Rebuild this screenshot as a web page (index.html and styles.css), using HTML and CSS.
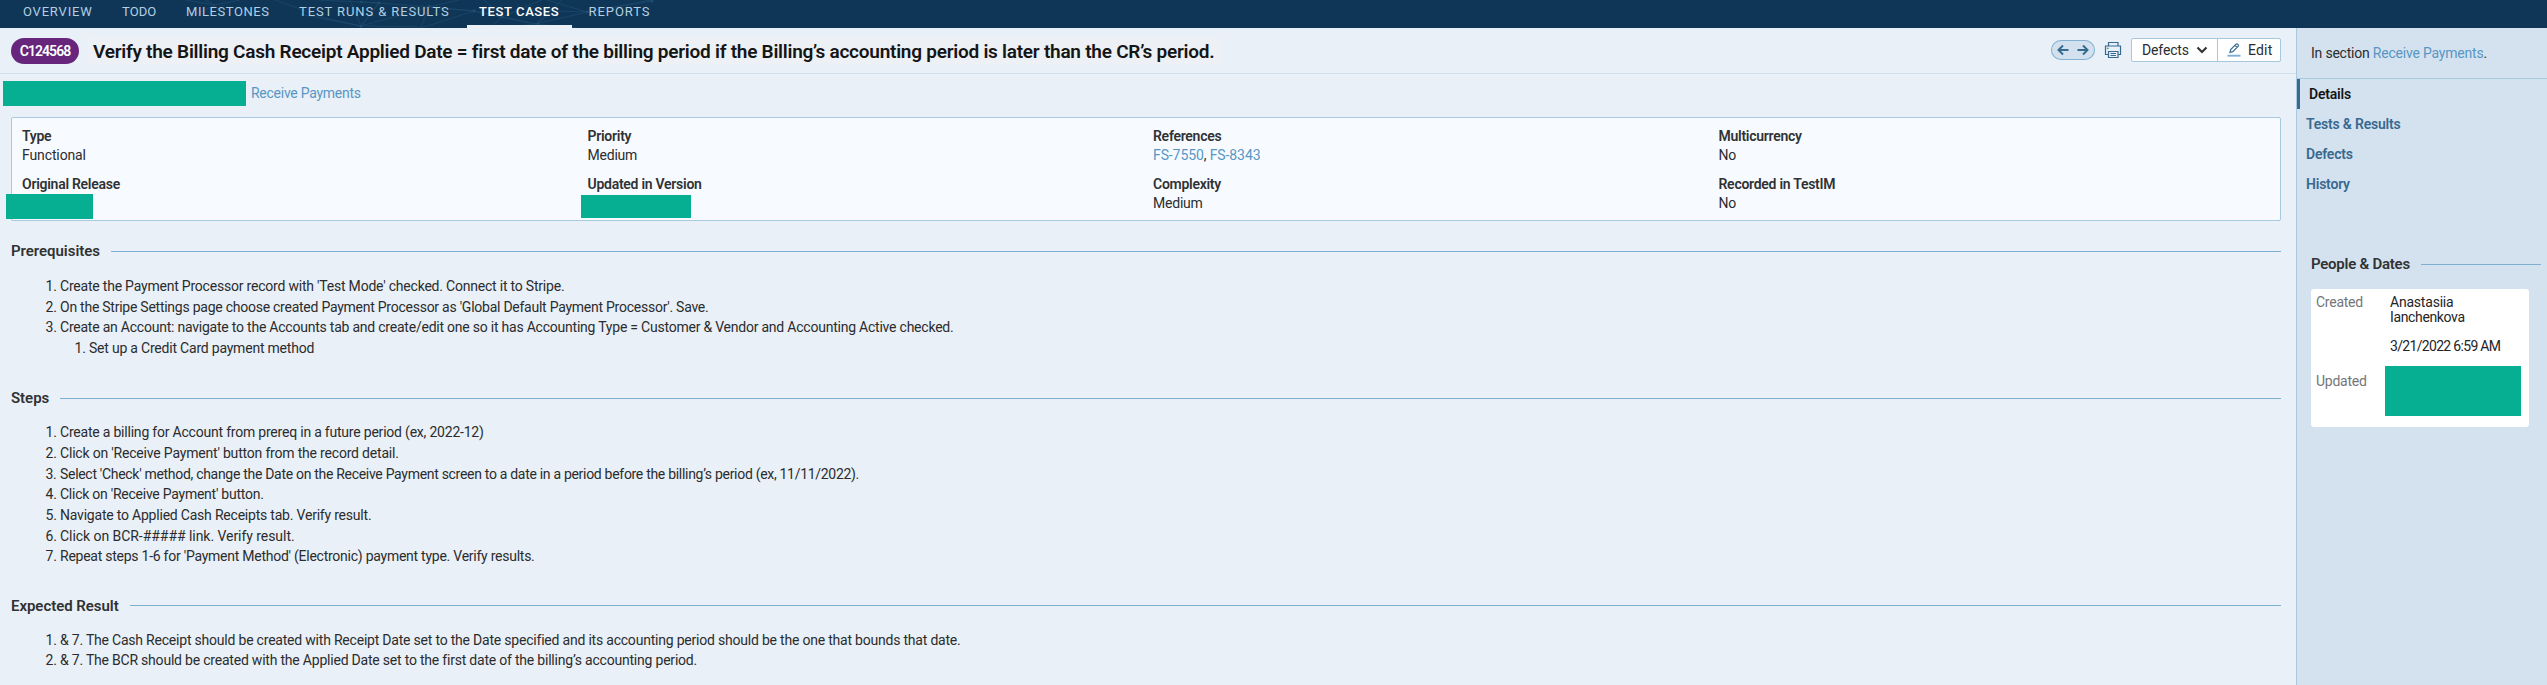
FILE: index.html
```html
<!DOCTYPE html>
<html lang="en">
<head>
<meta charset="utf-8">
<title>C124568 - Test Case</title>
<link rel="stylesheet" href="styles.css">
</head>
<body>
<nav class="nav">
  <svg class="nav-web" width="500" height="28" viewBox="170 0 500 28" fill="none" stroke="#2a5c80" stroke-width=".8">
    <path d="M185 0l30 5 25-5M205 0l10 5-25 12M275 0l50 18 36 8 18-23-60-3M300 14l61 12 68-19M361 26L350 0M379 3l-18 23M379 3l50 4 45 4M361 2l18 1M361 26l60 1 8-20 30-7M429 7l45 4 28 6 34 7 18-13 35 1M421 28l53-17 28 6-18-17M502 17l34 7 26-24M490 28l12-11 40-17M536 24l51-12 64-12M500 28l36-4 40 4M587 12l-40-12M587 12l65-11"/>
    <g fill="#2f6488" stroke="none"><circle cx="361" cy="26.5" r="1.4"/><circle cx="361" cy="2" r="1.2"/><circle cx="379" cy="3" r="1.4"/><circle cx="429" cy="6" r="1.3"/><circle cx="474" cy="11" r="1.7"/><circle cx="502" cy="17" r="1.3"/><circle cx="538" cy="24" r="1.4"/><circle cx="587" cy="12" r="1.4"/><circle cx="652" cy="1" r="1.5"/></g>
  </svg>
  <a class="tab tab-overview">OVERVIEW</a>
  <a class="tab tab-todo">TODO</a>
  <a class="tab tab-milestones">MILESTONES</a>
  <a class="tab tab-runs">TEST RUNS &amp; RESULTS</a>
  <a class="tab tab-cases active">TEST CASES</a>
  <a class="tab tab-reports">REPORTS</a>
</nav>
<div class="layout">
  <main class="main">
    <header class="header">
      <span class="badge">C124568</span>
      <h1 class="title">Verify the Billing Cash Receipt Applied Date = first date of the billing period if the Billing’s accounting period is later than the CR’s period.</h1>
      <div class="tools">
        <div class="pager">
          <svg width="44" height="20" viewBox="0 0 44 20" fill="none" stroke="#376a91" stroke-width="2"><path d="M17.5 10H8M12 5.5L7.5 10l4.5 4.5M26.5 10H36M32 5.500l4.500 4.500-4.500 4.500"/></svg>
        </div>
        <svg class="printer" width="18" height="18" viewBox="0 0 18 18" fill="none" stroke="#376a91" stroke-width="1.200"><path d="M4.500 4.500V1.500h9.500v3M4 13.500H1.500v-8.500h15v8.500H14M4.500 10.500h9.500v6H4.500zM6.500 12.500h5.500M6.500 14.500h5.500"/><circle cx="3.800" cy="7.300" r=".9" fill="#16b089" stroke="none"/></svg>
        <div class="buttons">
          <button class="btn btn-defects">Defects<svg width="12" height="8" viewBox="0 0 12 8" fill="none" stroke="#333" stroke-width="2.100"><path d="M1.500 1.500L6 6l4.500-4.500"/></svg></button>
          <button class="btn btn-edit"><svg width="14" height="14" viewBox="0 0 14 14" fill="none" stroke="#376a91" stroke-width="1.200"><path d="M3 9.500l.7-3L9 1.200q1-.7 1.900.2.900.9.200 1.900L5.800 8.700zM8 2.300l2.200 2.200"/><path d="M.5 12.700h13" stroke="#7fb0d1" stroke-width="1.900"/></svg>Edit</button>
        </div>
      </div>
    </header>
    <div class="crumb"><span class="mask mask-crumb"></span><a class="link">Receive Payments</a></div>
    <section class="card">
      <div class="field"><b>Type</b><span class="t-12">Functional</span></div>
      <div class="field"><b>Priority</b><span>Medium</span></div>
      <div class="field"><b>References</b><span class="t-10"><a class="link">FS-7550</a>, <a class="link">FS-8343</a></span></div>
      <div class="field"><b>Multicurrency</b><span>No</span></div>
      <div class="field"><b>Original Release</b><i class="mask mask-release"></i></div>
      <div class="field"><b>Updated in Version</b><i class="mask mask-version"></i></div>
      <div class="field"><b>Complexity</b><span>Medium</span></div>
      <div class="field"><b>Recorded in TestIM</b><span>No</span></div>
    </section>
    <h2 class="section prereq">Prerequisites</h2>
    <ol class="list">
      <li>Create the Payment Processor record with 'Test Mode' checked. Connect it to Stripe.</li>
      <li class="t-25">On the Stripe Settings page choose created Payment Processor as 'Global Default Payment Processor'. Save.</li>
      <li class="t-22">Create an Account: navigate to the Accounts tab and create/edit one so it has Accounting Type = Customer &amp; Vendor and Accounting Active checked.</li>
    </ol>
    <ol class="list nested">
      <li>Set up a Credit Card payment method</li>
    </ol>
    <h2 class="section steps">Steps</h2>
    <ol class="list">
      <li>Create a billing for Account from prereq in a future period (ex, 2022-12)</li>
      <li class="t-19">Click on 'Receive Payment' button from the record detail.</li>
      <li class="t-30">Select 'Check' method, change the Date on the Receive Payment screen to a date in a period before the billing’s period (ex, 11/11/2022).</li>
      <li class="t-25">Click on 'Receive Payment' button.</li>
      <li>Navigate to Applied Cash Receipts tab. Verify result.</li>
      <li class="t-5">Click on BCR-##### link. Verify result.</li>
      <li class="t-25">Repeat steps 1-6 for 'Payment Method' (Electronic) payment type. Verify results.</li>
    </ol>
    <h2 class="section expected">Expected Result</h2>
    <ol class="list">
      <li>&amp; 7. The Cash Receipt should be created with Receipt Date set to the Date specified and its accounting period should be the one that bounds that date.</li>
      <li>&amp; 7. The BCR should be created with the Applied Date set to the first date of the billing’s accounting period.</li>
    </ol>
  </main>
  <aside class="side">
    <div class="insection">In section <a class="link">Receive Payments</a>.</div>
    <a class="sidelink current">Details</a>
    <a class="sidelink">Tests &amp; Results</a>
    <a class="sidelink">Defects</a>
    <a class="sidelink">History</a>
    <h2 class="section people">People &amp; Dates</h2>
    <div class="dates">
      <span class="label">Created</span>
      <div class="value">Anastasiia<br><span class="t-36">Ianchenkova</span><p>3/21/2022 6:59 AM</p></div>
      <span class="label label-updated">Updated</span>
      <i class="mask mask-updated"></i>
    </div>
  </aside>
</div>
</body>
</html>
```

FILE: styles.css
```css
* { box-sizing: border-box; }
body {
  margin: 0;
  height: 685px;
  overflow: hidden;
  background: #e9f0f7;
  color: #2b2c2e;
  font: 14px/19px Roboto, "Liberation Sans", sans-serif;
  letter-spacing: -.21px;
}
.link { color: #5896c4; }
.mask { display: block; background: #06ae92; }
.t-5 { letter-spacing: -.05px; }
.t-10 { letter-spacing: -.1px; }
.t-12 { letter-spacing: -.12px; }
.t-19 { letter-spacing: -.19px; }
.t-22 { letter-spacing: -.225px; }
.t-25 { letter-spacing: -.25px; }
.t-30 { letter-spacing: -.3px; }
.t-36 { letter-spacing: -.36px; }

.nav {
  position: relative;
  display: flex;
  height: 28px;
  padding-left: 11px;
  gap: 6px;
  background: #0f3657;
}
.nav-web { position: absolute; left: 170px; top: 0; opacity: .5; }
.tab {
  position: relative;
  height: 28px;
  padding: 2px 12px 0;
  white-space: nowrap;
  font-size: 13px;
  line-height: 19px;
  color: #b3cfe1;
  letter-spacing: .8px;
}
.tab-overview { width: 93px; }
.tab-todo { width: 58px; letter-spacing: .1px; }
.tab-milestones { width: 107px; letter-spacing: .57px; }
.tab-runs { width: 174px; letter-spacing: .89px; }
.tab-cases { width: 105px; letter-spacing: .61px; }
.tab-reports { width: 86px; padding-left: 10.5px; letter-spacing: .93px; }
.tab.active { color: #fff; font-weight: 500; border-bottom: 3px solid #e9f0f7; }

.layout { display: flex; height: 657px; }
.main { width: 2296px; }
.header {
  display: flex;
  align-items: center;
  height: 46px;
  padding: 1px 15px 0 11px;
  border-bottom: 1px solid #cfdfec;
}
.badge {
  width: 68px;
  height: 26px;
  border-radius: 13px;
  background: #67267b;
  color: #fff;
  font-size: 14px;
  font-weight: 600;
  line-height: 26px;
  text-align: center;
  letter-spacing: -.95px;
}
.title {
  margin: 0 auto 0 9px;
  padding: 1px 5px 0;
  background: #edf0f4;
  color: #141516;
  font-size: 19px;
  font-weight: 600;
  line-height: 25px;
  white-space: nowrap;
  letter-spacing: -.245px;
}
.tools { display: flex; align-items: center; margin-bottom: 2px; }
.pager {
  display: flex;
  width: 44px;
  height: 20px;
  border-radius: 10px;
  background: #d3e1ee;
  box-shadow: inset 0 0 0 1px #82b2d4;
}
.printer { margin: 0 9px; }
.buttons { display: flex; width: 150px; height: 24px; border: 1px solid #a5c8df; border-radius: 2px; background: #fff; }
.btn {
  display: flex;
  align-items: center;
  border: 0;
  padding: 0;
  background: none;
  color: #2b2c2e;
  font: 14px/20px Roboto, "Liberation Sans", sans-serif;
}
.btn-defects { width: 86px; padding-left: 10px; gap: 7px; border-right: 1px solid #a5c8df; letter-spacing: -.14px; }
.btn-edit { padding-left: 9px; gap: 7px; letter-spacing: .2px; }

.crumb { display: flex; align-items: center; height: 43px; padding: 0 0 5px 3px; }
.mask-crumb { width: 243px; height: 25px; margin: 1px 5px 0 0; }
.crumb .link { letter-spacing: -.26px; }

.card {
  display: grid;
  grid-template-columns: repeat(4, 565.5px);
  grid-template-rows: 48px 48px;
  width: 2270px;
  height: 104px;
  margin-left: 11px;
  padding: 9px 0 0 10px;
  border: 1px solid #a8c9de;
  border-radius: 2px;
  background: #f7fbff;
}
.field b, .field span { display: block; font-weight: 400; }
.field b { font-weight: 600; letter-spacing: -.27px; color: #303234; }
.mask-release { width: 87px; height: 25px; margin: 0 0 0 -16px; }
.mask-version { width: 110px; height: 23px; margin: 1px 0 0 -6.5px; }

.section {
  display: flex;
  align-items: center;
  gap: 11px;
  width: 2270px;
  height: 20px;
  margin: 0 0 0 11px;
  color: #303234;
  font-size: 15px;
  font-weight: 600;
  line-height: 20px;
  letter-spacing: -.04px;
}
.section::after { content: ""; flex: 1; height: 1px; background: #7dafd0; }
.prereq { margin-top: 20px; }
.steps { margin-top: 29.5px; }
.expected { margin-top: 28.5px; }

.list { margin: 14px 0 0 45.5px; padding: 0; list-style: none; counter-reset: n; }
.prereq + .list { margin-top: 15px; }
.list li { display: flex; height: 20.7px; line-height: 20.7px; white-space: nowrap; counter-increment: n; }
.list li::before { content: counter(n) "."; width: 14.5px; }
.list.nested { margin: 0 0 0 74.5px; }

.side { width: 251px; border-left: 1px solid #a8c9de; background: #d4e2ef; }
.insection { height: 51px; padding: 16px 0 0 14px; border-bottom: 1px solid #a8c9de; }
.sidelink { display: block; height: 30px; padding-left: 9px; line-height: 30px; font-weight: 600; color: #38698f; }
.sidelink.current { border-left: 3px solid #38698f; color: #141516; }
.people { width: 230px; margin: 55px 0 0 14px; letter-spacing: -.25px; }
.dates {
  display: grid;
  grid-template-columns: 69px 139px;
  grid-template-rows: 69px 50px;
  width: 218px;
  height: 138px;
  margin: 15px 0 0 14px;
  padding: 6px 0 0 5px;
  border-radius: 3px;
  background: #fff;
  line-height: 15px;
}
.label { color: #747678; letter-spacing: -.25px; }
.value { padding-left: 5px; color: #232426; }
.value p { margin: 14px 0 0; letter-spacing: -.68px; }
.label-updated { padding-top: 10px; }
.mask-updated { width: 136px; height: 50px; margin-top: 2px; }
```
